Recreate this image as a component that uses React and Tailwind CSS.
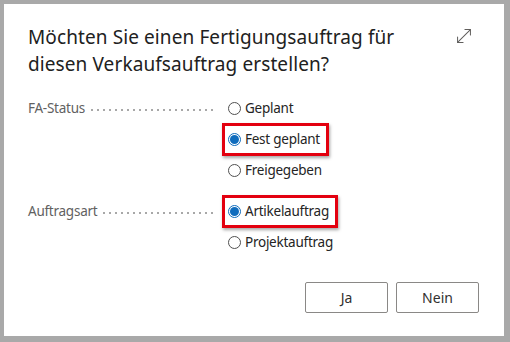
import { MoveDiagonal } from "lucide-react";

function Radio({ checked }) {
  return checked ? (
    <span className="flex h-[13px] w-[13px] items-center justify-center rounded-full border border-[#0f6cbd] bg-white">
      <span className="h-[9px] w-[9px] rounded-full bg-[#0f6cbd]" />
    </span>
  ) : (
    <span className="h-[13px] w-[13px] rounded-full border border-[#505050] bg-white" />
  );
}

function Option({ label, checked, marked }) {
  if (marked) {
    return (
      <div className="-my-px flex h-[33px]">
        <div className="flex items-center gap-[4px] pl-[6px] pr-[9px] inset-ring-[3px] inset-ring-[#e3000f] shadow-[1px_2px_3px_rgba(0,0,0,0.35)]">
          <Radio checked={checked} />
          <span>{label}</span>
        </div>
      </div>
    );
  }
  return (
    <div className="flex h-[31px] items-center gap-[4px] pl-[6px]">
      <Radio checked={checked} />
      <span>{label}</span>
    </div>
  );
}

function Field({ label, children }) {
  return (
    <div className="grid grid-cols-[194px_1fr]">
      <div className="flex h-[31px] items-center text-[#616161]">
        <span>{label}</span>
        <span className="ml-[4px] mr-[7px] mt-[3px] h-[2px] flex-1 bg-[radial-gradient(circle,#a8a8a8_0.8px,transparent_1.1px)] bg-[length:6px_2px] bg-repeat-x" />
      </div>
      <div className="flex flex-col">{children}</div>
    </div>
  );
}

export default function App() {
  return (
    <div
      className="h-[342px] w-[510px] bg-[#a9a9a9] pb-[6px] pl-1 pr-[6px] pt-1"
      style={{ fontFamily: '"Noto Sans", "Open Sans", sans-serif' }}
    >
      <div className="flex h-full flex-col bg-white">
        <div className="flex items-start justify-between pl-6 pr-[29px] pt-5">
          <h1 className="text-[19px] leading-[27px] tracking-[0.1px] text-[#212121]">
            Möchten Sie einen Fertigungsauftrag für
            <br />
            diesen Verkaufsauftrag erstellen?
          </h1>
          <MoveDiagonal size={22} strokeWidth={1.1} className="mt-[1px] text-[#605e5c]" />
        </div>

        <div className="mt-[15px] flex flex-col gap-[10px] pl-6 text-[13.5px] tracking-[-0.25px] text-[#242424]">
          <Field label="FA-Status">
            <Option label="Geplant" />
            <Option label="Fest geplant" checked marked />
            <Option label="Freigegeben" />
          </Field>
          <Field label="Auftragsart">
            <Option label="Artikelauftrag" checked marked />
            <Option label="Projektauftrag" />
          </Field>
        </div>

        <div className="mt-auto flex justify-end gap-2 pb-[23px] pr-[25px]">
          <button className="h-[31px] w-[83px] rounded-[2px] border border-[#8a8886] text-[14px] text-[#323130]">
            Ja
          </button>
          <button className="h-[31px] w-[83px] rounded-[2px] border border-[#8a8886] text-[14px] text-[#323130]">
            Nein
          </button>
        </div>
      </div>
    </div>
  );
}
